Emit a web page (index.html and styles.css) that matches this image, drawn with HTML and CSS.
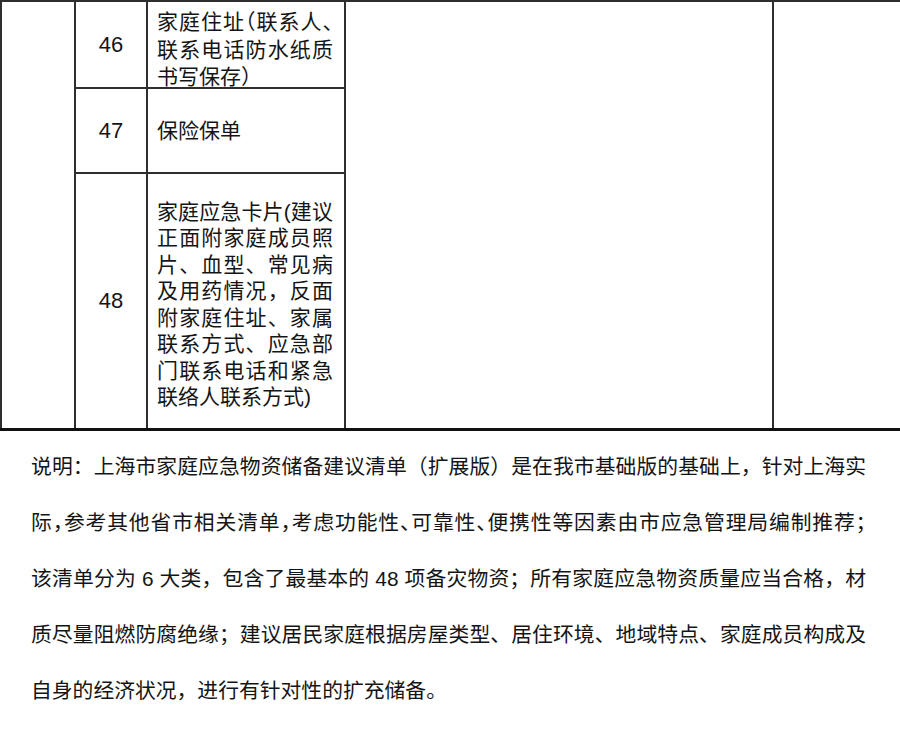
FILE: index.html
```html
<!DOCTYPE html>
<html lang="zh-CN">
<head>
<meta charset="utf-8">
<title>家庭应急物资储备建议清单</title>
<link rel="stylesheet" href="styles.css">
</head>
<body>
<table class="list">
  <colgroup>
    <col class="c-cat">
    <col class="c-num">
    <col class="c-item">
    <col class="c-desc">
    <col class="c-note">
  </colgroup>
  <tr class="r46">
    <td class="cat" rowspan="3"></td>
    <td class="num">46</td>
    <td class="item">
      <span class="ln j halt">家庭住址（联系人、</span>
      <span class="ln j">联系电话防水纸质</span>
      <span class="ln last">书写保存）</span>
    </td>
    <td class="desc" rowspan="3"></td>
    <td class="extra" rowspan="3"></td>
  </tr>
  <tr class="r47">
    <td class="num">47</td>
    <td class="item"><span class="ln">保险保单</span></td>
  </tr>
  <tr class="r48">
    <td class="num">48</td>
    <td class="item tight">
      <span class="ln j">家庭应急卡片(建议</span>
      <span class="ln j">正面附家庭成员照</span>
      <span class="ln j">片、血型、常见病</span>
      <span class="ln j">及用药情况，反面</span>
      <span class="ln j">附家庭住址、家属</span>
      <span class="ln j">联系方式、应急部</span>
      <span class="ln j">门联系电话和紧急</span>
      <span class="ln">联络人联系方式)</span>
    </td>
  </tr>
</table>
<p class="note">
  <span class="nl j">说明：上海市家庭应急物资储备建议清单（扩展版）是在我市基础版的基础上，针对上海实</span>
  <span class="nl j halt">际，参考其他省市相关清单，考虑功能性、可靠性、便携性等因素由市应急管理局编制推荐；</span>
  <span class="nl j">该清单分为 6 大类，包含了最基本的 48 项备灾物资；所有家庭应急物资质量应当合格，材</span>
  <span class="nl j">质尽量阻燃防腐绝缘；建议居民家庭根据房屋类型、居住环境、地域特点、家庭成员构成及</span>
  <span class="nl">自身的经济状况，进行有针对性的扩充储备。</span>
</p>
</body>
</html>
```
FILE: styles.css
```css
* { box-sizing: border-box; }
html, body { margin: 0; padding: 0; background: #ffffff; }
body {
  color: #151515;
  font-family: "Liberation Sans", "Noto Sans CJK SC", sans-serif;
}

.list {
  border-collapse: collapse;
  table-layout: fixed;
  width: 900px;
  border-bottom: 3px solid #111111;
}
.c-cat { width: 74px; }
.c-num { width: 72px; }
.c-item { width: 198px; }
.c-desc { width: 428px; }
.c-note { width: 128px; }

.list td {
  border: 2px solid #2e2e2e;
  padding: 0;
  vertical-align: middle;
}
.list .r46 td { height: 87px; }
.list .r47 td { height: 85px; }
.list .r48 td { height: 256px; }

.list .num {
  text-align: center;
  font-size: 22px;
}
.list .item {
  padding: 0 0 0 9px;
  font-size: 21px;
  line-height: 27.5px;
}
.list .r46 .item { vertical-align: top; padding-top: 6px; }
.list .r46 .last { margin-bottom: -8px; }
.list .item.tight { line-height: 26.5px; padding-top: 8px; }

.ln { display: block; width: 176px; }
.j { text-align: justify; text-align-last: justify; }
.halt { font-feature-settings: "halt"; }

.note {
  margin: 8px 0 0 31px;
  width: 835px;
  font-size: 20.8px;
  line-height: 56px;
}
.nl { display: block; }
```
